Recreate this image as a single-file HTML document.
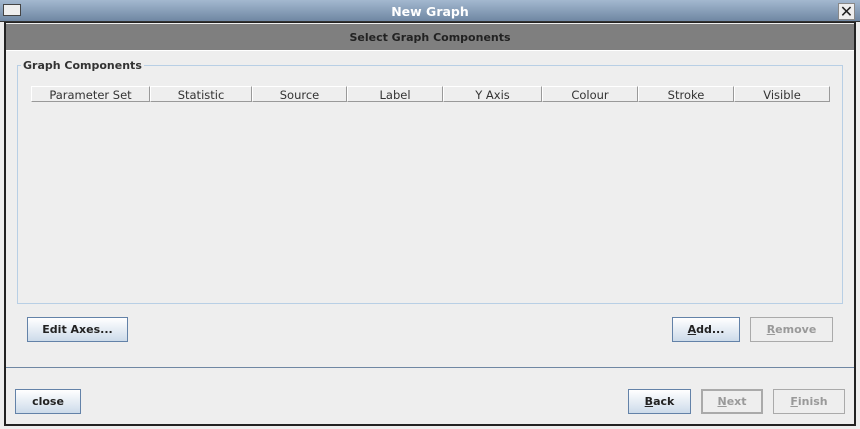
<!DOCTYPE html>
<html><head><style>
*{margin:0;padding:0;box-sizing:border-box}
body{width:860px;height:429px;background:#eee;font-family:"DejaVu Sans","Liberation Sans",sans-serif;position:relative;overflow:hidden}
.abs{position:absolute}
.title{left:0;top:0;width:860px;height:22px;background:linear-gradient(#a3b8cf,#6f87a3);border-bottom:1px solid #333}
.title span{position:absolute;left:0;right:0;top:4px;text-align:center;color:#fff;font-weight:bold;font-size:12.5px}
.frame{left:4px;top:22px;width:852px;height:404px;border:2px solid #222;border-top:1px solid #222;background:#eee}
.hdr{left:6px;top:24px;width:848px;height:27px;background:#7f7f7f;border-bottom:1px solid #fff;font-size:11px;font-weight:bold;color:#222;text-align:center;line-height:28px}
.grp{left:17px;top:65px;width:826px;height:239px;border:1px solid #b8cfe5}
.gt{left:21px;top:59px;background:#eee;padding:0 2px;font-size:11px;font-weight:bold;color:#333}
.th{top:86px;height:16px;border:1px solid #999;border-top-color:#fff;border-left-color:#fff;background:#eee;font-size:11.5px;color:#333;text-align:center;line-height:16px}
.btn{height:25px;border:1px solid #6382a8;background:linear-gradient(#fff,#cddbea);font-size:11px;font-weight:bold;color:#222;text-align:center;line-height:24px}
.dis{border:1px solid #aaa;background:#eee;color:#999}
.sep{left:6px;top:367px;width:848px;height:1px;background:#6f87a3}
</style></head><body>
<div class="abs title"><span>New Graph</span>
<div class="abs" style="left:3px;top:4px;width:18px;height:12px;background:#eee;border:1px solid #444"></div>
<div class="abs" style="left:838px;top:3px;width:17px;height:17px;background:#eee;border:1px solid #888;font-size:16px;line-height:15px;text-align:center;color:#222;font-weight:bold">✕</div>
</div>
<div class="abs frame"></div>
<div class="abs hdr">Select Graph Components</div>
<div class="abs grp"></div>
<div class="abs gt">Graph Components</div>
<div class="abs th" style="left:31px;width:119px">Parameter Set</div>
<div class="abs th" style="left:150px;width:102px">Statistic</div>
<div class="abs th" style="left:252px;width:95px">Source</div>
<div class="abs th" style="left:347px;width:96px">Label</div>
<div class="abs th" style="left:443px;width:99px">Y Axis</div>
<div class="abs th" style="left:542px;width:96px">Colour</div>
<div class="abs th" style="left:638px;width:96px">Stroke</div>
<div class="abs th" style="left:734px;width:96px">Visible</div>
<div class="abs btn" style="left:27px;top:317px;width:101px">Edit Axes...</div>
<div class="abs btn" style="left:672px;top:317px;width:68px"><u>A</u>dd...</div>
<div class="abs btn dis" style="left:750px;top:317px;width:83px"><u>R</u>emove</div>
<div class="abs sep"></div>
<div class="abs btn" style="left:15px;top:389px;width:66px">close</div>
<div class="abs btn" style="left:628px;top:389px;width:63px"><u>B</u>ack</div>
<div class="abs btn dis" style="left:701px;top:389px;width:62px;border-width:2px;line-height:22px"><u>N</u>ext</div>
<div class="abs btn dis" style="left:773px;top:389px;width:72px"><u>F</u>inish</div>
</body></html>
